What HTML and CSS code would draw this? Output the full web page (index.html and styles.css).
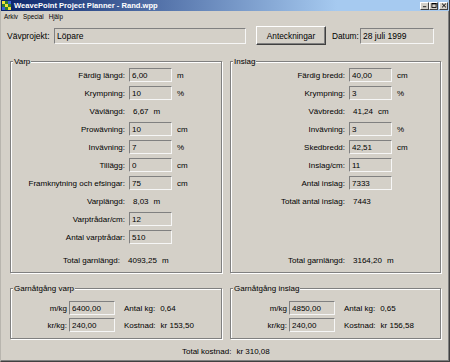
FILE: index.html
```html
<!DOCTYPE html>
<html lang="sv">
<head>
  <meta charset="UTF-8">
  <title>WeavePoint Project Planner</title>
  <link rel="stylesheet" href="styles.css">
</head>
<body>

<div class="window">
  <div class="titlebar">
    <svg class="app-icon" viewBox="0 0 9 9">
      <rect width="9" height="9" fill="#2f7d2f"/>
      <rect x="0" y="0" width="3" height="3" fill="#f2e23a"/>
      <rect x="6" y="0" width="3" height="3" fill="#3a62d8"/>
      <rect x="3" y="3" width="3" height="3" fill="#f2e23a"/>
      <rect x="0" y="6" width="3" height="3" fill="#3a62d8"/>
      <rect x="6" y="6" width="3" height="3" fill="#f2e23a"/>
    </svg>
    <span class="title">WeavePoint Project Planner - Rand.wpp</span>
    <div class="controls">
      <span class="ctl"><svg viewBox="0 0 7 6"><rect x="1" y="4" width="4" height="1" fill="#000"/></svg></span>
      <span class="ctl"><svg viewBox="0 0 7 6"><rect x="1" y="0.5" width="5" height="5" fill="none" stroke="#000" stroke-width="1"/><rect x="1" y="0" width="5.5" height="1.6" fill="#000"/></svg></span>
      <span class="ctl close"><svg viewBox="0 0 7 6"><path d="M1.2 0.8 L5.8 5.2 M5.8 0.8 L1.2 5.2" stroke="#000" stroke-width="1.2"/></svg></span>
    </div>
  </div>

  <div class="menubar">
    <span>Arkiv</span>
    <span>Special</span>
    <span>Hjälp</span>
  </div>

  <div class="toprow">
    <span class="project-label">Vävprojekt:</span>
    <input class="field project" value="Löpare" readonly>
    <button class="btn">Anteckningar</button>
    <span class="date-label">Datum:</span>
    <input class="field date" value="28 juli 1999" readonly>
  </div>

  <div class="panels">
    <div class="group measure">
      <span class="legend">Varp</span>
      <div class="row"><span class="label">Färdig längd:</span><input class="field" value="6,00" readonly><span class="unit">m</span></div>
      <div class="row"><span class="label">Krympning:</span><input class="field" value="10" readonly><span class="unit">%</span></div>
      <div class="row"><span class="label">Vävlängd:</span><span class="value">6,67<span class="u">m</span></span></div>
      <div class="row"><span class="label">Prowävning:</span><input class="field" value="10" readonly><span class="unit">cm</span></div>
      <div class="row"><span class="label">Invävning:</span><input class="field" value="7" readonly><span class="unit">%</span></div>
      <div class="row"><span class="label">Tillägg:</span><input class="field" value="0" readonly><span class="unit">cm</span></div>
      <div class="row"><span class="label">Framknytning och efsingar:</span><input class="field" value="75" readonly><span class="unit">cm</span></div>
      <div class="row"><span class="label">Varplängd:</span><span class="value">8,03<span class="u">m</span></span></div>
      <div class="row"><span class="label">Varptrådar/cm:</span><input class="field" value="12" readonly></div>
      <div class="row"><span class="label">Antal varptrådar:</span><input class="field" value="510" readonly></div>
      <div class="row total-row shifted"><span class="label">Total garnlängd:</span><span class="value">4093,25<span class="u">m</span></span></div>
    </div>

    <div class="group measure">
      <span class="legend">Inslag</span>
      <div class="row"><span class="label">Färdig bredd:</span><input class="field" value="40,00" readonly><span class="unit">cm</span></div>
      <div class="row"><span class="label">Krympning:</span><input class="field" value="3" readonly><span class="unit">%</span></div>
      <div class="row"><span class="label">Vävbredd:</span><span class="value">41,24<span class="u">cm</span></span></div>
      <div class="row"><span class="label">Invävning:</span><input class="field" value="3" readonly><span class="unit">%</span></div>
      <div class="row"><span class="label">Skedbredd:</span><input class="field" value="42,51" readonly><span class="unit">cm</span></div>
      <div class="row"><span class="label">Inslag/cm:</span><input class="field" value="11" readonly></div>
      <div class="row"><span class="label">Antal inslag:</span><input class="field" value="7333" readonly></div>
      <div class="row"><span class="label">Totalt antal inslag:</span><span class="value">7443</span></div>
      <div class="row total-row"><span class="label">Total garnlängd:</span><span class="value">3164,20<span class="u">m</span></span></div>
    </div>
  </div>

  <div class="panels cost">
    <div class="group cost-group">
      <span class="legend">Garnåtgång varp</span>
      <div class="cost-row"><span class="label">m/kg</span><input class="field" value="6400,00" readonly><span class="info">Antal kg:<span class="gap">0,64</span></span></div>
      <div class="cost-row"><span class="label">kr/kg:</span><input class="field" value="240,00" readonly><span class="info">Kostnad:<span class="gap">kr 153,50</span></span></div>
    </div>
    <div class="group cost-group">
      <span class="legend">Garnåtgång inslag</span>
      <div class="cost-row"><span class="label">m/kg</span><input class="field" value="4850,00" readonly><span class="info">Antal kg:<span class="gap">0,65</span></span></div>
      <div class="cost-row"><span class="label">kr/kg:</span><input class="field" value="240,00" readonly><span class="info">Kostnad:<span class="gap">kr 156,58</span></span></div>
    </div>
  </div>

  <div class="total">Total kostnad:<span class="gap">kr 310,08</span></div>
</div>

</body>
</html>
```

FILE: styles.css
```css
* { box-sizing: border-box; }
body { margin: 0; font-family: "Liberation Sans", Arial, sans-serif; font-size: 8px; color: #000; }

.window { width: 450px; height: 362px; background: #d4d0c8; border-left: 1px solid #b8b5ae; border-right: 1px solid #404040; border-bottom: 1px solid #404040; box-shadow: inset -1px -1px 0 #808080; overflow: hidden; }

/* title bar + menu */
.titlebar { height: 11px; display: flex; align-items: center; padding-left: 1px; background: linear-gradient(to right, #0a246a, #a6caf0 75%, #a6caf0); }
.app-icon { width: 9px; height: 9px; margin-right: 3px; flex: none; }
.title { color: #fff; font-weight: bold; font-size: 7.6px; white-space: nowrap; }
.controls { margin-left: auto; margin-right: 1px; display: flex; }
.ctl { width: 9px; height: 8px; background: #d4d0c8; border: 1px solid; border-color: #fff #404040 #404040 #fff; display: flex; align-items: center; justify-content: center; }
.ctl svg { width: 6px; height: 5px; }
.ctl.close { margin-left: 1px; }

.menubar { height: 10px; display: flex; align-items: center; gap: 5px; padding-left: 3px; font-size: 6.3px; }

/* top row */
.toprow { display: flex; align-items: center; height: 19px; margin-top: 5px; padding-left: 6px; }
.project-label { width: 47px; font-size: 8.5px; white-space: nowrap; }
.field { height: 14px; width: 100%; padding: 0 2px; font: inherit; color: #000; background: #d4d0c8; border: 1px solid; border-color: #808080 #f6f6f6 #f6f6f6 #808080; outline: none; }
.project { width: 192px; height: 16px; font-size: 8.5px; }
.btn { width: 70px; height: 19px; margin-left: 10px; padding: 0; font: inherit; font-size: 8.3px; background: #d4d0c8; border: 1px solid; border-color: #fff #404040 #404040 #fff; box-shadow: inset -1px -1px 0 #808080; }
.date-label { width: 28px; margin-left: 6px; font-size: 8.3px; }
.date { width: 74px; height: 16px; font-size: 8.5px; }

/* group boxes */
.panels { display: grid; grid-template-columns: 212px 211px; column-gap: 8px; padding-left: 9px; margin-top: 16px; }
.panels.cost { margin-top: 15px; }
.group { position: relative; border: 1px solid #808080; box-shadow: inset 1px 1px 0 #fff, 1px 1px 0 #fff; }
.legend { position: absolute; top: -5px; left: 2px; padding: 0 1px; line-height: 9px; background: #d4d0c8; white-space: nowrap; }

.measure { height: 212px; display: flex; flex-direction: column; gap: 4px; padding: 6px 0 5px; }
.row { display: grid; grid-template-columns: 114px 43px auto; column-gap: 4px; align-items: center; height: 14px; }
.label { text-align: right; white-space: nowrap; }
.unit { padding-left: 1px; }
.value { grid-column: 2 / 4; padding-left: 4px; white-space: nowrap; }
.u { margin-left: 5px; }
.total-row { margin-top: auto; }
.shifted { grid-template-columns: 109px 43px auto; }

.cost-group { display: flex; flex-direction: column; gap: 3px; padding: 12px 0 6px; }
.cost-row { display: grid; grid-template-columns: 56px 46px auto; column-gap: 2px; align-items: center; height: 14px; }
.info { margin-left: 7px; white-space: nowrap; }
.gap { margin-left: 5px; }

.total { margin-top: 8px; padding-left: 181px; line-height: 10px; }
```
